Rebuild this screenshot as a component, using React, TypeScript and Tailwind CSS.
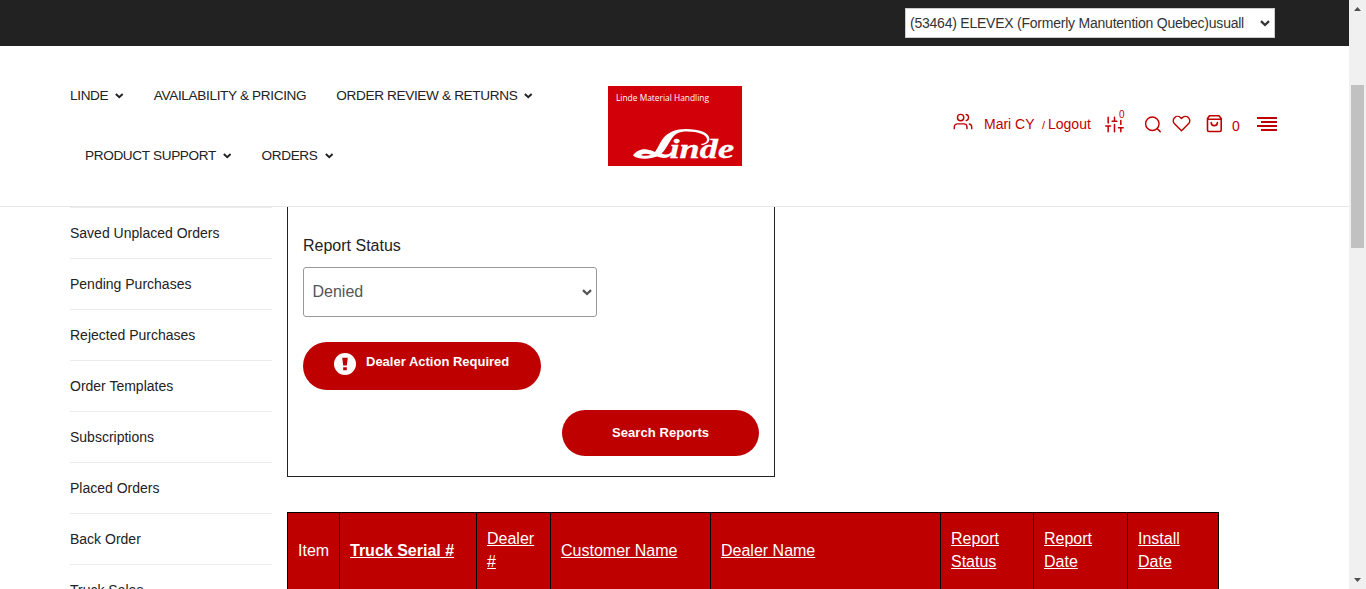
import React from "react";

const Chevron = ({ className = "" }: { className?: string }) => (
  <svg viewBox="0 0 10 7" className={className} fill="none" stroke="currentColor" strokeWidth="2.300">
    <path d="M1 1.200 L5 5 L9 1.200" />
  </svg>
);

function NavItem({ label, menu = true, first = false }: { label: string; menu?: boolean; first?: boolean }) {
  return (
    <a className={`flex h-[60px] items-center whitespace-nowrap pb-px pr-[15px] ${first ? "" : "pl-[15px]"}`}>
      <span>{label}</span>
      {menu && <Chevron className="ml-[7px] mt-px h-[6px] w-[8.500px]" />}
    </a>
  );
}

function Logo() {
  return (
    <svg viewBox="0 0 134 80" className="block h-[80px] w-[134px]">
      <rect width="134" height="80" fill="#d20009" />
      <text x="8" y="15" fontSize="9.500" fill="#fff" fontFamily="'Open Sans','Noto Sans',sans-serif" textLength="93" lengthAdjust="spacingAndGlyphs">
        Linde Material Handling
      </text>
      <g fill="#fff">
        <path d="M25 69.500C28 65 33 62.500 39 63.500C42 64 45 65 47 66C50 62 51.500 57 55 52.500C60 46 68 43 78 43C91 43 101.500 46.500 101.500 53C101.500 56.500 98 59 93.500 59L93 58C97 57.500 99 56 99 53.500C99 48.500 90 45.500 79 45.500C75 45.500 72 46 69 47.500C62 51.500 60 62 53.500 67.500C57 69 61 69 63 66L64.500 67C62 72.500 55 73 49 70.500C43 73 30 74 25 69.500Z" />
      </g>
      <path d="M33 69C36 70.300 40 70 43 68.800C39 67.300 36 67.300 33 69Z" fill="#d20009" />
      <text x="61.500" y="71.500" fontSize="27" fontWeight="700" fontStyle="italic" fill="#fff" stroke="#fff" strokeWidth="0.300" fontFamily="'Liberation Serif',serif" textLength="64.500" lengthAdjust="spacingAndGlyphs">
        inde
      </text>
    </svg>
  );
}

const stroke = { fill: "none", stroke: "currentColor", strokeLinecap: "round", strokeLinejoin: "round" } as const;

function Tools() {
  return (
    <div className="flex h-[60px] items-start text-[14px] leading-[20px] text-[#be0000]">
      <svg viewBox="0 0 24 24" className="mt-[12px] h-[19px] w-[20px]" {...stroke} strokeWidth="1.800">
        <path d="M17 21v-2a4 4 0 0 0-4-4H5a4 4 0 0 0-4 4v2" />
        <circle cx="9" cy="7" r="4" />
        <path d="M23 21v-2a4 4 0 0 0-3-3.870M16 3.130a4 4 0 0 1 0 7.750" />
      </svg>
      <span className="ml-[11px] mt-[14px] w-[58px] whitespace-nowrap">Mari CY</span>
      <span className="mt-[15px] w-[6px] text-[11px]">/</span>
      <span className="mt-[14px] w-[57px]">Logout</span>
      <svg viewBox="0 0 24 24" className="mt-[15px] h-[19px] w-[19px]" {...stroke} strokeWidth="1.900">
        <path d="M4 21v-7M4 10V3M12 21v-9M12 8V3M20 21v-5M20 12V7M1 14h6M9 8h6M17 16h6" />
      </svg>
      <span className="-ml-[5px] mt-[5px] w-[25px] text-[10px]">0</span>
      <svg viewBox="0 0 24 24" className="mt-[15px] h-[19px] w-[19px]" {...stroke} strokeWidth="1.800">
        <circle cx="10.500" cy="11" r="8.500" />
        <path d="M20.500 21l-4-4" />
      </svg>
      <svg viewBox="0 0 24 24" className="ml-[9px] mt-[14px] h-[19px] w-[19px]" {...stroke} strokeWidth="1.800">
        <path d="M20.840 4.610a5.500 5.500 0 0 0-7.780 0L12 5.670l-1.060-1.060a5.500 5.500 0 0 0-7.780 7.780L12 21.230l8.840-8.840a5.500 5.500 0 0 0 0-7.780z" />
      </svg>
      <svg viewBox="0 0 19 19" className="ml-[14px] mt-[14px] h-[19px] w-[19px]" {...stroke} strokeWidth="1.600">
        <path d="M2.500 4.500L4.500 1.800h9.500l2.200 2.700v11.500q0 1.500-1.500 1.500H4q-1.500 0-1.500-1.500zM2.500 5.200h13.700M6.200 8.500a3.100 3.100 0 0 0 6.200 0" />
      </svg>
      <span className="ml-[8px] mt-[16px] w-[25px]">0</span>
      <svg viewBox="0 0 20 14" className="mt-[17px] h-[14px] w-[20px]" fill="currentColor" shapeRendering="crispEdges">
        <path d="M0 0h20v2H0zM4 4h16v2H4zM0 8h20v2H0zM4 12h16v2H4z" />
      </svg>
    </div>
  );
}

const links = [
  "Saved Unplaced Orders",
  "Pending Purchases",
  "Rejected Purchases",
  "Order Templates",
  "Subscriptions",
  "Placed Orders",
  "Back Order",
  "Truck Sales",
];

const columns = [
  { w: "w-[52px]", lines: ["Item"], plain: true },
  { w: "w-[137px]", lines: ["Truck Serial #"], bold: true },
  { w: "w-[74px]", lines: ["Dealer", "#"] },
  { w: "w-[160px]", lines: ["Customer Name"] },
  { w: "w-[230px]", lines: ["Dealer Name"] },
  { w: "w-[93px]", lines: ["Report", "Status"] },
  { w: "w-[94px]", lines: ["Report", "Date"] },
  { w: "w-[90px]", lines: ["Install", "Date"] },
];

export default function App() {
  return (
    <div className="flex h-[589px] w-[1366px] overflow-hidden bg-white font-['Liberation_Sans',Arial,sans-serif] text-[#222]">
      <div className="flex h-full w-[1349px] flex-col overflow-hidden">
        <div className="flex h-[46px] shrink-0 justify-end bg-[#222] pr-[74px] pt-2">
          <div className="flex h-[30px] w-[370px] items-center justify-between border border-[#ccc] bg-white pl-1 pr-1 text-[14px] tracking-[-0.230px] text-[#333]">
            <span className="whitespace-nowrap">(53464) ELEVEX (Formerly Manutention Quebec)usuall</span>
            <Chevron className="h-[7px] w-[10px]" />
          </div>
        </div>

        <header className="flex h-[161px] shrink-0 border-b border-[#e8e8e8] pl-[70px] pt-[20px]">
          <nav className="w-[538px] text-[13.600px] leading-[20px] tracking-[-0.350px]">
            <div className="flex">
              <NavItem label="LINDE" first />
              <NavItem label="AVAILABILITY & PRICING" menu={false} />
              <NavItem label="ORDER REVIEW & RETURNS" />
            </div>
            <div className="flex">
              <NavItem label="PRODUCT SUPPORT" />
              <NavItem label="ORDERS" />
            </div>
          </nav>
          <div className="w-[345px] pt-[20px]">
            <Logo />
          </div>
          <div className="pt-[34px]">
            <Tools />
          </div>
        </header>

        <main className="flex min-h-0 flex-1 overflow-hidden pl-[70px]">
          <aside className="w-[202px] shrink-0 text-[14px]">
            {links.map((l) => (
              <div key={l} className="flex h-[51px] items-center border-t border-[#ebebeb]">
                {l}
              </div>
            ))}
          </aside>
          <section className="ml-[15px] w-[932px] shrink-0">
            <div className="h-[270px] w-[488px] border border-t-0 border-[#222] px-[15px] pt-[27px]">
              <label className="block h-[33px] text-[16px] leading-[24px]">Report Status</label>
              <div className="flex h-[50px] w-[294px] items-center justify-between rounded-[3px] border border-[#999] pl-[8.500px] pr-[4px] text-[16px] text-[#555]">
                <span>Denied</span>
                <Chevron className="mt-px h-[7px] w-[10px]" />
              </div>
              <button className="mt-[25px] flex h-[48px] w-[238px] rounded-full bg-[#be0000] pl-[31px] pt-[11px] text-[13px] font-bold text-white">
                <svg viewBox="0 0 22 22" className="h-[22px] w-[22px]">
                  <circle cx="11" cy="11" r="11" fill="#fff" />
                  <path d="M8.200 4.800h5.600l-1 7.700H9.200zM9.200 14.200h3.600v3H9.200z" fill="#be0000" />
                </svg>
                <span className="ml-[10px] whitespace-nowrap leading-[18px]">Dealer Action Required</span>
              </button>
              <div className="mt-[20px] flex justify-end">
                <button className="h-[46px] w-[197px] rounded-full bg-[#be0000] text-[13px] font-bold tracking-[0.080px] text-white">
                  Search Reports
                </button>
              </div>
            </div>
            <div className="mt-[35px] flex h-[100px] border border-black bg-[#be0000] text-[16px] leading-[23px] text-white">
              {columns.map((c, i) => (
                <div
                  key={i}
                  className={`flex h-full shrink-0 flex-col justify-center border-r border-black pb-[24px] pl-[10px] last:border-r-0 ${c.w} ${c.bold ? "font-bold" : ""} ${c.plain ? "" : "underline"}`}
                >
                  {c.lines.map((t) => (
                    <span key={t} className="whitespace-nowrap">{t}</span>
                  ))}
                </div>
              ))}
            </div>
          </section>
        </main>
      </div>

      <div className="flex h-full w-[17px] flex-col items-center bg-[#f0f0f0]">
        <svg viewBox="0 0 17 17" className="h-[17px] w-[17px]" fill="#505050"><path d="M5 11h7L8.500 7z" /></svg>
        <div className="mt-[68px] h-[163px] w-[13px] bg-[#c1c1c1]" />
        <svg viewBox="0 0 17 17" className="mt-auto h-[17px] w-[17px]" fill="#505050"><path d="M5 6h7L8.500 10z" /></svg>
      </div>
    </div>
  );
}
